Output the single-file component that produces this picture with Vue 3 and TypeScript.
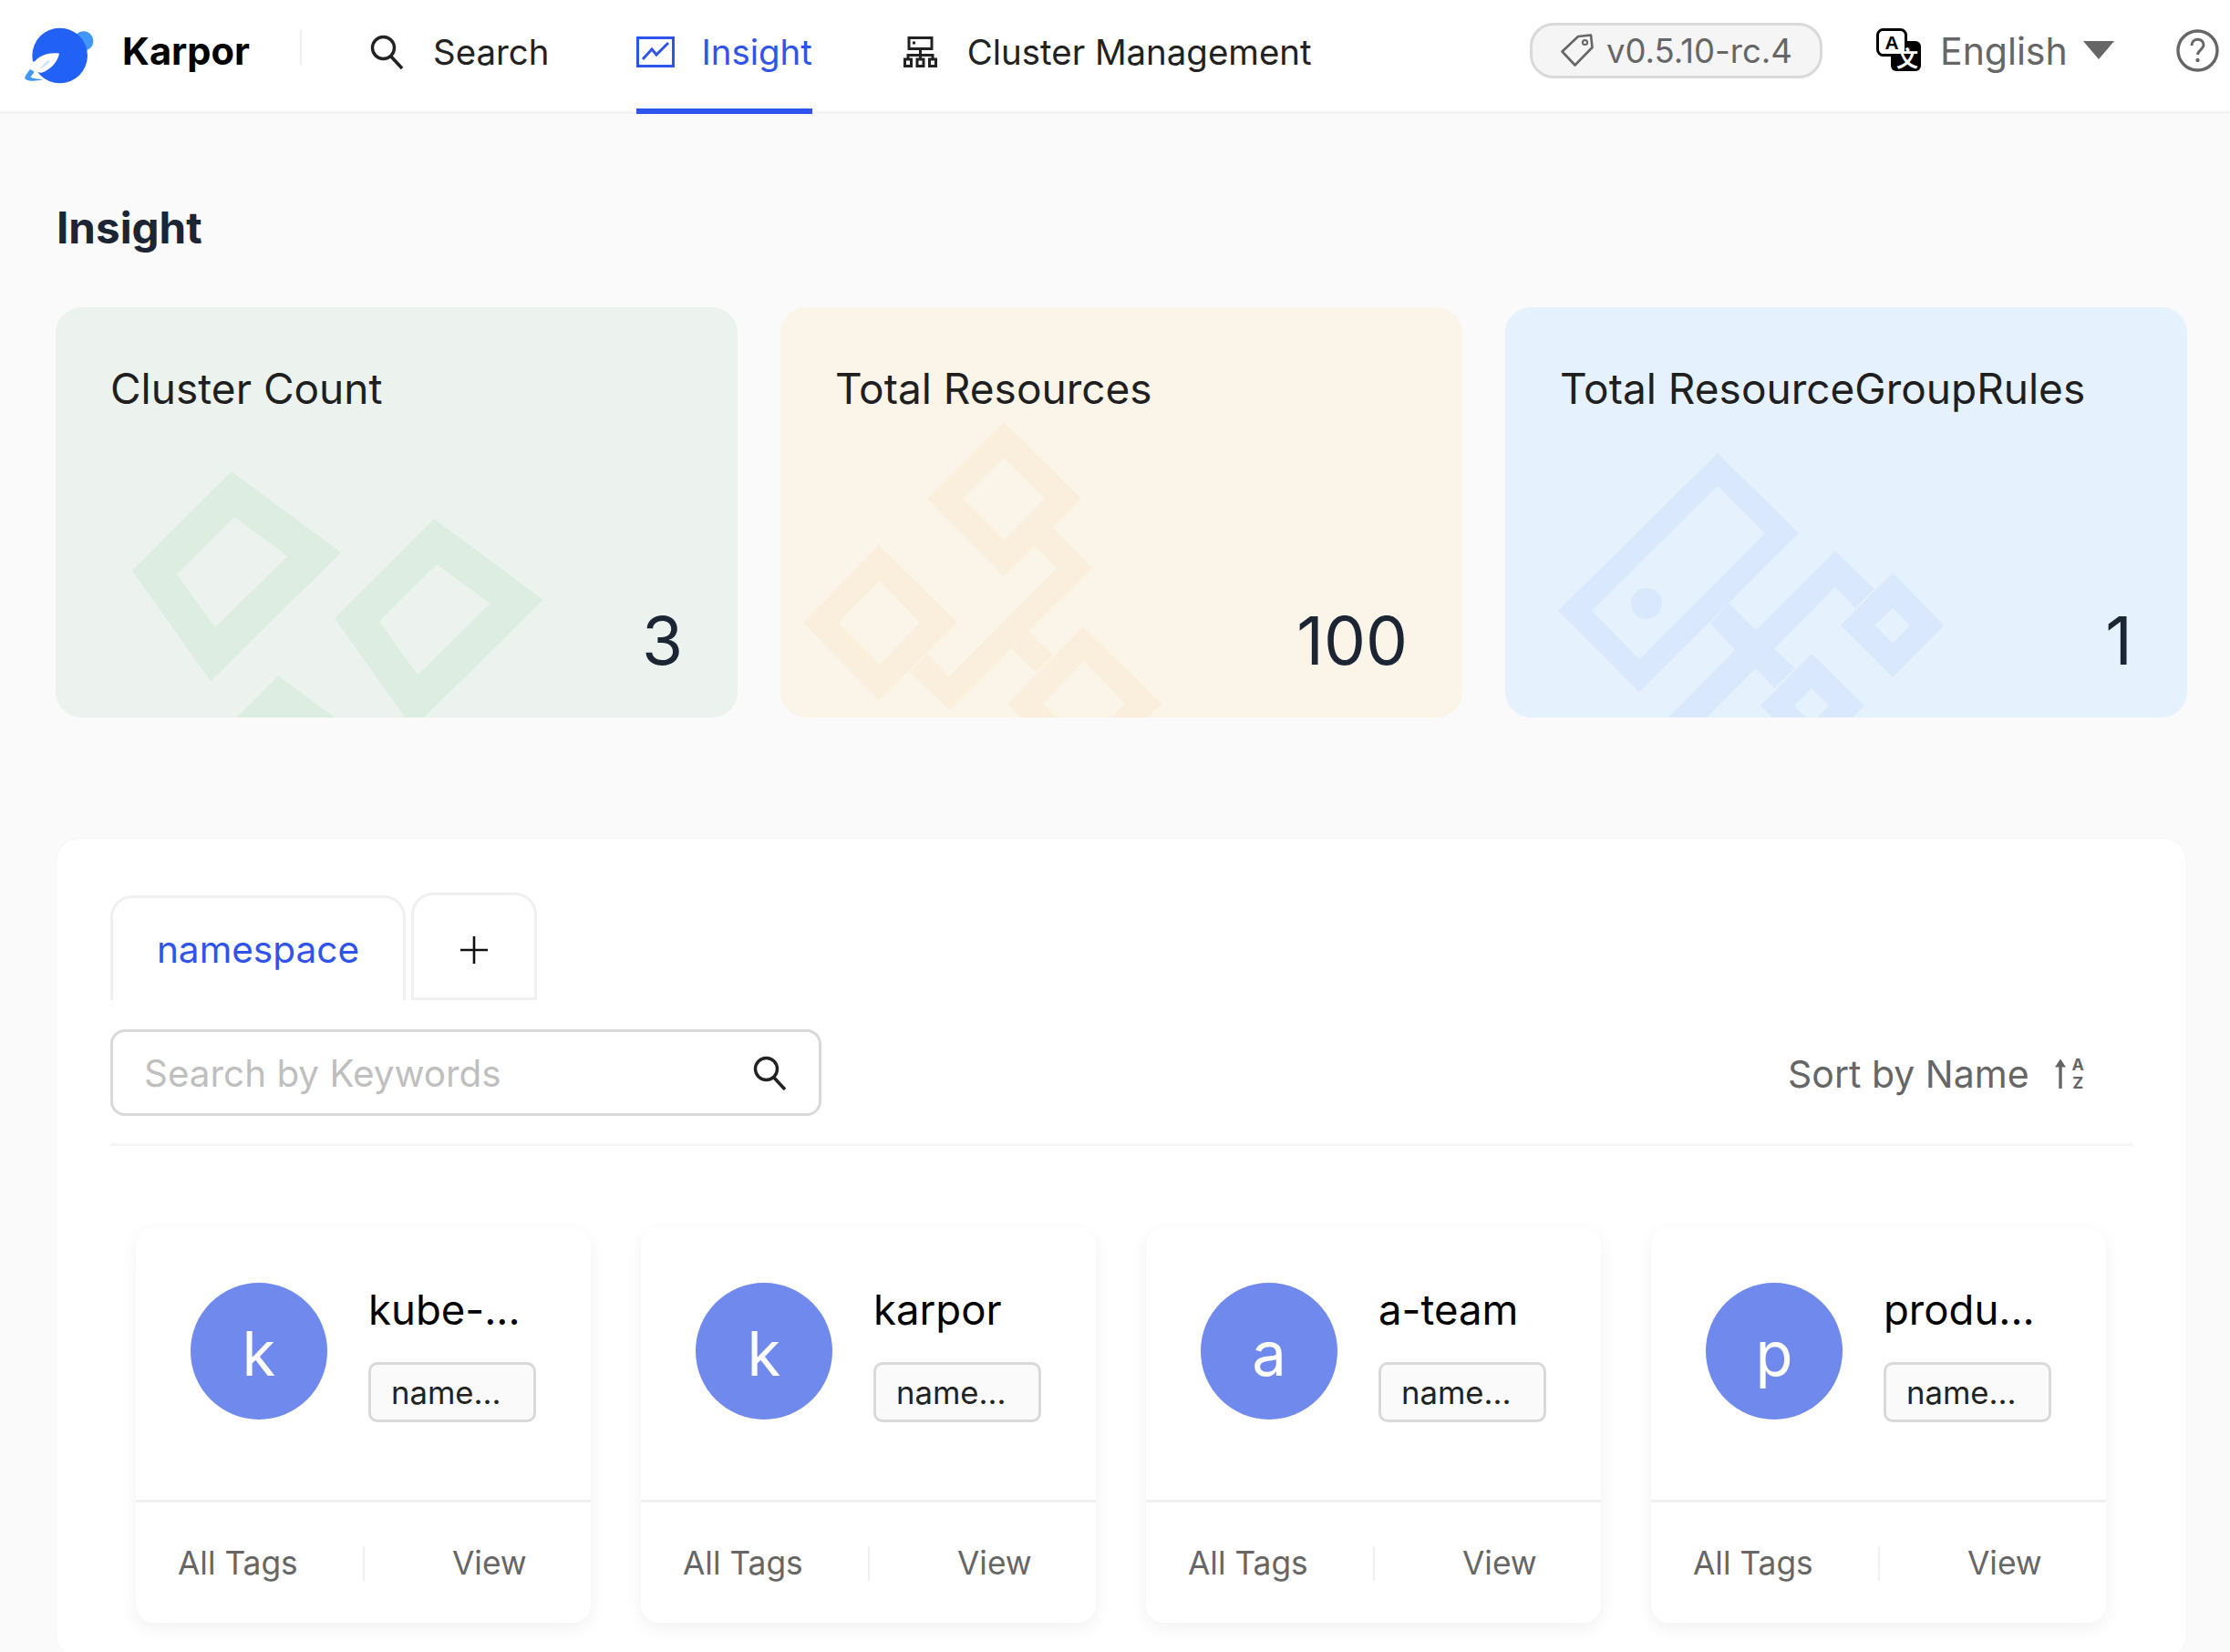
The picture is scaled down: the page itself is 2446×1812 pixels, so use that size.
<script setup lang="ts">
interface NsCard {
  letter: string
  name: string
}
const cards: NsCard[] = [
  { letter: 'k', name: 'kube-...' },
  { letter: 'k', name: 'karpor' },
  { letter: 'a', name: 'a-team' },
  { letter: 'p', name: 'produ...' },
]
</script>

<template>
  <div class="page">
    <header class="header">
      <div class="brand">
        <svg class="logo" viewBox="0 0 300 240" aria-hidden="true">
          <circle cx="230" cy="72" r="32" fill="#4296f6" />
          <circle cx="152" cy="120" r="91" fill="#2161f6" />
          <path d="M150 113 C120 108 88 118 70 138 L46 147 L64 155 L62 172 C75 172 85 177 92 176 C120 168 145 140 150 113Z" fill="#fff" />
          <path d="M54 165 C44 178 34 190 38 197 C50 206 75 204 98 198 C80 198 62 196 56 190 C60 184 68 178 66 172Z" fill="#4296f6" />
          <path d="M112 136 C100 146 92 156 84 166 C98 160 112 150 120 138Z" fill="#cfe2fd" />
        </svg>
        <span class="brand-name">Karpor</span>
      </div>
      <span class="brand-sep"></span>
      <nav class="nav">
        <a class="nav-item">
          <svg class="nav-icon search-icon" viewBox="0 0 38 38" aria-hidden="true">
            <circle cx="15.5" cy="14.5" r="12" fill="none" stroke="#222" stroke-width="3.4" />
            <path d="M24 24 L36 37" stroke="#222" stroke-width="3.6" fill="none" />
          </svg>
          <span>Search</span>
        </a>
        <a class="nav-item active">
          <svg class="nav-icon insight-icon" viewBox="0 0 42 34" aria-hidden="true">
            <rect x="1.5" y="1.5" width="39" height="31" fill="none" stroke="#2f54eb" stroke-width="3" />
            <path d="M7 25 L17 14 L22 20 L35 7" fill="none" stroke="#2f54eb" stroke-width="3" />
          </svg>
          <span>Insight</span>
        </a>
        <a class="nav-item">
          <svg class="nav-icon cluster-icon" viewBox="0 0 37 34" aria-hidden="true">
            <rect x="6" y="1.5" width="25" height="12" fill="none" stroke="#222" stroke-width="3" />
            <rect x="10" y="5.5" width="3" height="3" fill="#222" />
            <path d="M18.5 13 V26 M5 26 V20.5 H32 V26" fill="none" stroke="#222" stroke-width="3" />
            <rect x="1.5" y="25" width="7" height="7.5" fill="none" stroke="#222" stroke-width="3" />
            <rect x="15" y="25" width="7" height="7.5" fill="none" stroke="#222" stroke-width="3" />
            <rect x="28.5" y="25" width="7" height="7.5" fill="none" stroke="#222" stroke-width="3" />
          </svg>
          <span>Cluster Management</span>
        </a>
      </nav>
      <div class="header-right">
        <div class="version">
          <svg class="tag-icon" viewBox="0 0 36 36" aria-hidden="true">
            <path d="M19 3 L33 1.5 L34.5 15 L15.5 34.5 L1.5 19.5 Z" fill="none" stroke="#666" stroke-width="2.6" stroke-linejoin="round" />
            <circle cx="26.5" cy="9.5" r="2.6" fill="none" stroke="#666" stroke-width="2" />
          </svg>
          <span class="version-text">v0.5.10-rc.4</span>
        </div>
        <svg class="lang-icon" viewBox="0 0 49 54" aria-hidden="true">
          <rect x="16" y="14" width="33" height="33" rx="6" fill="#000" />
          <rect x="1.5" y="1.5" width="31" height="28" rx="6" fill="#fff" stroke="#000" stroke-width="3" />
          <text x="17" y="23" text-anchor="middle" class="lang-a">A</text>
          <text x="34" y="42" text-anchor="middle" class="lang-z">文</text>
        </svg>
        <span class="lang-text">English</span>
        <span class="caret"></span>
        <svg class="help-icon" viewBox="0 0 47 47" aria-hidden="true">
          <circle cx="23.5" cy="23.5" r="21.5" fill="none" stroke="#666" stroke-width="3.4" />
          <path d="M17 18 C17 9 30 9 30 17.5 C30 22 24 22.5 23.5 28" fill="none" stroke="#666" stroke-width="3" />
          <circle cx="23.5" cy="34" r="2.2" fill="#666" />
        </svg>
      </div>
    </header>

    <main class="main">
      <h1 class="title">Insight</h1>
      <section class="stats">
        <div class="stat stat-green">
          <svg class="wm" viewBox="0 0 748 450" aria-hidden="true">
            <path fill="#ddede1" fill-rule="evenodd" d="M193 180 L313 269 L170 410 L84 289Z M196 230 L133 293 L175 351 L254.5 273Z" />
            <path fill="#ddede1" fill-rule="evenodd" d="M415 232 L535 321 L392 462 L306 341Z M418 282 L355 345 L397 403 L476.5 325Z" />
            <path fill="#ddede1" fill-rule="evenodd" d="M244 404 L364 493 L221 634 L135 513Z" />
          </svg>
          <div class="stat-title">Cluster Count</div>
          <div class="stat-value">3</div>
        </div>
        <div class="stat stat-orange">
          <svg class="wm" viewBox="0 0 748 450" aria-hidden="true">
            <g fill="#faefdc" fill-rule="evenodd">
              <path d="M298 241 L342 286 L185 442 L142 400 L161 380 L185 405 L303 286 L279 262Z" />
              <path d="M272 356 L299 381 L280 400 L254 375Z" />
              <path d="M245 126 L330 210 L245 295 L161 210Z M245 165 L200 210 L245 255 L290 210Z" />
              <path d="M108 261 L194 346 L108 431 L25 346Z M109 300 L63 346 L109 392 L153 346Z" />
              <path d="M332 350 L418 435 L332 520 L249 435Z M333 388 L288 435 L333 480 L378 435Z" />
            </g>
          </svg>
          <div class="stat-title">Total Resources</div>
          <div class="stat-value">100</div>
        </div>
        <div class="stat stat-blue">
          <svg class="wm" viewBox="0 0 748 450" aria-hidden="true">
            <g fill="#d9e8fd" fill-rule="evenodd">
              <path d="M233 160 L322 248 L147 422 L58 333Z M233 196 L95 333 L147 386 L285 248Z" />
              <circle cx="155" cy="325" r="17" />
              <path d="M245 325 L275 354 L362 267 L405 309 L384 330 L362 307 L295 375 L318 396 L295 418 L275 396 L201 470 L159 470 L252 376 L225 347Z" />
              <path d="M425 291 L481 349 L425 406 L368 349Z M425 330 L405 349 L425 368 L444 349Z" />
              <path d="M336 380 L394 437 L336 494 L280 437Z M336 418 L317 437 L336 456 L355 437Z" />
            </g>
          </svg>
          <div class="stat-title">Total ResourceGroupRules</div>
          <div class="stat-value">1</div>
        </div>
      </section>

      <section class="panel">
        <div class="tabs">
          <div class="tab tab-active">namespace</div>
          <div class="tab tab-add">
            <svg class="plus" viewBox="0 0 30 30" aria-hidden="true">
              <path d="M15 0 V30 M0 15 H30" stroke="#111" stroke-width="2.6" fill="none" />
            </svg>
          </div>
        </div>
        <div class="toolbar">
          <div class="search-box">
            <span class="placeholder">Search by Keywords</span>
            <svg class="search-box-icon" viewBox="0 0 38 38" aria-hidden="true">
              <circle cx="15.5" cy="14.5" r="12" fill="none" stroke="#222" stroke-width="3.4" />
              <path d="M24 24 L36 37" stroke="#222" stroke-width="3.6" fill="none" />
            </svg>
          </div>
          <div class="sort">
            <span>Sort by Name</span>
            <span class="sort-icon">
              <svg class="sort-arrow" viewBox="0 0 12 34" aria-hidden="true">
                <path d="M6 33 V8" stroke="#666" stroke-width="3.4" fill="none" />
                <path d="M6 0.5 L12 9.5 H0 Z" fill="#666" />
              </svg>
              <span class="sort-letters">
                <span>A</span>
                <span>Z</span>
              </span>
            </span>
          </div>
        </div>
        <div class="grid">
          <article v-for="card in cards" :key="card.name" class="card">
            <div class="card-top">
              <div class="avatar">{{ card.letter }}</div>
              <div class="card-info">
                <div class="card-name">{{ card.name }}</div>
                <div class="card-tag">name...</div>
              </div>
            </div>
            <div class="card-actions">
              <span class="action action-left">All Tags</span>
              <span class="action-sep"></span>
              <span class="action action-right">View</span>
            </div>
          </article>
        </div>
      </section>
    </main>
  </div>
</template>

<style>
html,
body {
  margin: 0;
  background: #fafafa;
}
</style>

<style scoped>
.page {
  width: 2446px;
  height: 1812px;
  overflow: hidden;
  background: #fafafa;
  font-family: Inter, 'Liberation Sans', sans-serif;
  color: #222;
}
.header {
  height: 122px;
  box-sizing: content-box;
  display: flex;
  align-items: center;
  background: #fff;
  border-bottom: 3px solid #f5f5f5;
  position: relative;
}
.brand {
  display: flex;
  align-items: center;
  margin-left: 15px;
}
.logo {
  width: 100px;
  height: 80px;
  display: block;
}
.brand-name {
  margin-left: 19px;
  margin-top: -10px;
  font-size: 41.6px;
  font-weight: 700;
  color: #000;
  width: 139px;
  white-space: nowrap;
}
.brand-sep {
  width: 2px;
  height: 38px;
  margin-left: 56px;
  margin-top: -18px;
  background: #f0f0f0;
}
.nav {
  display: flex;
  align-self: stretch;
  margin-left: 74px;
}
.nav-item {
  display: flex;
  align-items: center;
  height: 122px;
  font-size: 38.4px;
  color: #222;
  margin-right: 96px;
  box-sizing: border-box;
  padding-bottom: 8px;
  position: relative;
  white-space: nowrap;
}
.nav-item.active {
  color: #2f54eb;
  margin-right: 100px;
}
.nav-item.active::after {
  content: '';
  position: absolute;
  left: 0;
  right: 0;
  bottom: -3px;
  height: 6px;
  background: #2f54eb;
}
.nav-icon {
  display: block;
  margin-right: 29px;
  flex: none;
}
.search-icon {
  width: 38px;
  height: 38px;
  margin-right: 32px;
}
.insight-icon {
  width: 42px;
  height: 34px;
}
.cluster-icon {
  width: 37px;
  height: 34px;
  margin-right: 33px;
}
.header-right {
  position: absolute;
  left: 1678px;
  top: 0;
  height: 122px;
  display: flex;
  align-items: center;
}
.version {
  width: 321px;
  height: 61px;
  margin-top: -12px;
  box-sizing: border-box;
  border: 3px solid #d9d9d9;
  border-radius: 26px;
  background: #f5f5f5;
  color: #666;
  font-size: 36.5px;
  display: flex;
  align-items: center;
  padding-left: 31px;
  white-space: nowrap;
}
.version-text {
  padding-top: 2px;
}
.tag-icon {
  width: 36px;
  height: 36px;
  margin-right: 14px;
  flex: none;
}
.lang-icon {
  width: 49px;
  height: 54px;
  margin-left: 59px;
  margin-top: -6px;
  flex: none;
}
.lang-a {
  font-family: 'Liberation Sans', sans-serif;
  font-size: 21px;
  font-weight: 700;
  fill: #000;
}
.lang-z {
  font-family: 'Noto Sans CJK SC', sans-serif;
  font-size: 24px;
  font-weight: 700;
  fill: #fff;
}
.lang-text {
  font-size: 41px;
  color: #666;
  margin-left: 21px;
  margin-top: -10px;
  white-space: nowrap;
}
.caret {
  width: 0;
  height: 0;
  border-left: 17px solid transparent;
  border-right: 17px solid transparent;
  border-top: 20px solid #666;
  margin-left: 17px;
  margin-top: -12px;
}
.help-icon {
  width: 47px;
  height: 47px;
  margin-left: 68px;
  margin-top: -12px;
  flex: none;
}
.main {
  padding: 0 47px 0 61px;
}
.title {
  margin: 0;
  height: 212px;
  box-sizing: border-box;
  padding-top: 95px;
  font-size: 47.6px;
  line-height: 60px;
  font-weight: 700;
  color: #1c2533;
  padding-left: 1px;
}
.stats {
  display: grid;
  grid-template-columns: repeat(3, 748px);
  column-gap: 47px;
}
.stat {
  height: 450px;
  border-radius: 28px;
  position: relative;
  overflow: hidden;
}
.stat-green {
  background: #ecf3ee;
}
.stat-orange {
  background: #fbf4e9;
}
.stat-blue {
  background: #e6f1fe;
}
.wm {
  position: absolute;
  inset: 0;
  width: 748px;
  height: 450px;
}
.stat-title {
  position: relative;
  padding: 61px 0 0 60px;
  font-size: 46px;
  line-height: 56px;
  color: #1f1f1f;
}
.stat-value {
  position: absolute;
  right: 60px;
  top: 324px;
  font-size: 73px;
  line-height: 84px;
  color: #1c2533;
}
.panel {
  margin-top: 132px;
  height: 900px;
  box-sizing: border-box;
  background: #fff;
  border: 1px solid #f5f5f5;
  border-radius: 26px;
  padding: 59px 59px 0 59px;
}
.tabs {
  display: flex;
  align-items: flex-end;
  gap: 6px;
  height: 118px;
}
.tab {
  box-sizing: border-box;
  border: 3px solid #f0f0f0;
  border-bottom: none;
  border-radius: 24px 24px 0 0;
  display: flex;
  align-items: center;
  justify-content: center;
}
.tab-active {
  width: 324px;
  height: 115px;
  color: #2f54eb;
  font-size: 40.6px;
}
.tab-add {
  width: 138px;
  height: 118px;
  border-bottom: 3px solid #f0f0f0;
  padding-top: 8px;
}
.plus {
  width: 30px;
  height: 30px;
}
.toolbar {
  margin-top: 32px;
  height: 128px;
  border-bottom: 3px solid #f5f5f5;
  display: flex;
  justify-content: space-between;
  align-items: flex-start;
  box-sizing: border-box;
}
.search-box {
  width: 780px;
  height: 95px;
  box-sizing: border-box;
  border: 3px solid #d9d9d9;
  border-radius: 16px;
  display: flex;
  align-items: center;
  justify-content: space-between;
  padding: 0 35px 0 34px;
}
.placeholder {
  font-size: 40.4px;
  color: #bfbfbf;
  white-space: nowrap;
  padding-top: 2px;
}
.search-box-icon {
  width: 38px;
  height: 38px;
}
.sort {
  display: flex;
  align-items: center;
  height: 95px;
  padding-top: 2px;
  box-sizing: border-box;
  margin-right: 53px;
  font-size: 41px;
  color: #666;
  white-space: nowrap;
}
.sort-icon {
  display: flex;
  align-items: center;
  gap: 7px;
  margin-left: 28px;
  flex: none;
}
.sort-arrow {
  width: 12px;
  height: 34px;
  display: block;
}
.sort-letters {
  display: flex;
  flex-direction: column;
  font-size: 18px;
  line-height: 20px;
  font-weight: 700;
  color: #666;
  align-items: center;
}
.grid {
  margin-top: 90px;
  padding: 0 28px;
  display: grid;
  grid-template-columns: repeat(4, 499px);
  column-gap: 55px;
}
.card {
  height: 433px;
  box-sizing: border-box;
  background: #fff;
  border-radius: 20px;
  box-shadow: 0 6px 20px rgba(0, 0, 0, 0.06);
  display: flex;
  flex-direction: column;
}
.card-top {
  height: 301px;
  box-sizing: border-box;
  border-bottom: 3px solid #f0f0f0;
  padding: 60px 0 0 60px;
  display: flex;
}
.avatar {
  width: 150px;
  height: 150px;
  box-sizing: border-box;
  padding-top: 4px;
  border-radius: 50%;
  background: #7089ec;
  color: #fff;
  font-size: 67px;
  display: flex;
  align-items: center;
  justify-content: center;
  flex: none;
}
.card-info {
  margin-left: 46px;
  display: flex;
  flex-direction: column;
  align-items: flex-start;
}
.card-name {
  font-size: 45.5px;
  line-height: 56px;
  color: #000;
  margin-top: 2px;
  margin-left: -1px;
  white-space: nowrap;
}
.card-tag {
  margin-top: 29px;
  margin-left: -1px;
  width: 184px;
  height: 66px;
  box-sizing: border-box;
  border: 3px solid #d9d9d9;
  border-radius: 10px;
  background: #fafafa;
  font-size: 34.7px;
  line-height: 60px;
  padding-left: 22px;
  color: #222;
  white-space: nowrap;
}
.card-actions {
  flex: 1;
  display: flex;
  align-items: center;
  font-size: 35.3px;
  color: #666;
  padding-top: 1px;
}
.action {
  white-space: nowrap;
}
.action-left {
  margin-left: 46px;
  width: 203px;
}
.action-sep {
  width: 2px;
  height: 38px;
  background: #f0f0f0;
}
.action-right {
  margin-left: 96px;
}
</style>
